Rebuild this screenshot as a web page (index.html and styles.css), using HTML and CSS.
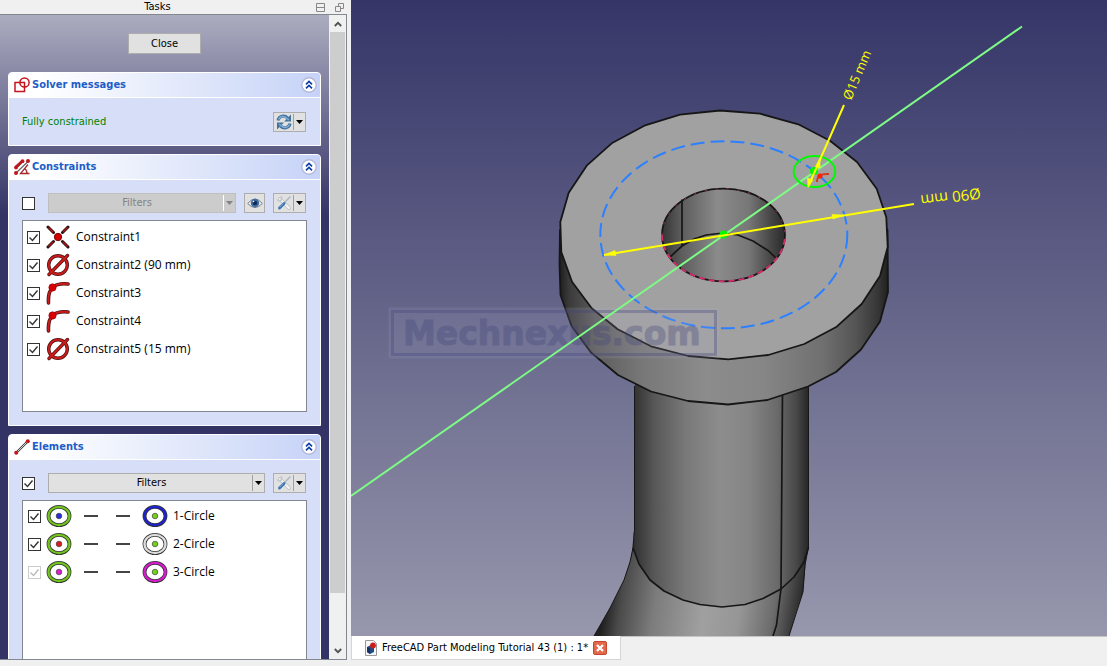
FILE: index.html
```html
<!DOCTYPE html>
<html lang="en">
<head>
<meta charset="utf-8">
<title>FreeCAD Part Modeling Tutorial 43</title>
<link rel="stylesheet" href="styles.css">
</head>
<body>
<svg class="defs" aria-hidden="true">
  <defs>
    <symbol id="caret" viewBox="0 0 7 4"><path d="M0 0h7L3.5 4z" fill="currentColor"/></symbol>
    <symbol id="collapse" viewBox="0 0 16 16">
      <circle cx="8" cy="8" r="7.2" fill="#fff" stroke="#b4b9da" stroke-width="1.4"/>
      <path d="M5 7.3l3-2.8 3 2.8M5 11.3l3-2.8 3 2.8" fill="none" stroke="#0c3fa8" stroke-width="1.7"/>
    </symbol>
    <symbol id="tools" viewBox="0 0 16 16">
      <path d="M4 4l9 9" stroke="#b9bdc0" stroke-width="3.6" stroke-linecap="round"/>
      <path d="M4 4l9 9" stroke="#f4f4f4" stroke-width="2.2" stroke-linecap="round"/>
      <path d="M1.500 4.500Q2.500 6.500 5 5.500Q6.500 3.500 4.500 1.500" fill="none" stroke="#c6cacc" stroke-width="1.800"/>
      <path d="M14.500 1.500L8 8" stroke="#a9b6c2" stroke-width="1.400"/>
      <path d="M8 8.500L3.500 13" stroke="#3f74b4" stroke-width="3" stroke-linecap="round"/>
      <path d="M7.500 8.200L3.500 12" stroke="#8cb1dc" stroke-width="1"/>
    </symbol>
    <symbol id="coincident" viewBox="0 0 24 24">
      <path d="M2 2l5.500 5.500M22 2l-5.500 5.500M2 22l5.500-5.500M22 22l-5.500-5.500" stroke="#2b1010" stroke-width="3" stroke-linecap="round"/>
      <path d="M2.500 2.500l4.500 4.500M21.500 2.500l-4.500 4.500M2.500 21.500l4.500-4.500M21.500 21.500l-4.500-4.500" stroke="#b01818" stroke-width="1.400"/>
      <circle cx="12" cy="12" r="3.700" fill="#d40000" stroke="#7a1010"/>
    </symbol>
    <symbol id="diameter" viewBox="0 0 24 24">
      <g fill="none" stroke-linecap="round">
        <circle cx="12" cy="12" r="9.300" stroke="#4a1414" stroke-width="3.400"/>
        <path d="M3 21.500L21.500 2.500" stroke="#4a1414" stroke-width="3.400"/>
        <circle cx="12" cy="12" r="9.300" stroke="#cc1a1a" stroke-width="2"/>
        <path d="M3 21.500L21.500 2.500" stroke="#cc1a1a" stroke-width="2"/>
      </g>
    </symbol>
    <symbol id="point-on" viewBox="0 0 24 24">
      <g fill="none" stroke-linecap="round">
        <path d="M2.500 22C2 14 3.500 9 7 6Q12 2 22 3" stroke="#4a1414" stroke-width="3.600"/>
        <path d="M2.500 22C2 14 3.500 9 7 6Q12 2 22 3" stroke="#cc1a1a" stroke-width="2"/>
      </g>
      <circle cx="6.500" cy="6.500" r="3.700" fill="#d80000" stroke="#8e0a0a" stroke-width=".6"/>
    </symbol>
    <symbol id="ring" viewBox="0 0 26 24">
      <ellipse cx="13" cy="12" rx="10.500" ry="9.200" fill="#fff" stroke="#333" stroke-width="3.800"/>
      <ellipse cx="13" cy="12" rx="10.500" ry="9.200" fill="none" stroke="currentColor" stroke-width="2.300"/>
    </symbol>
    <symbol id="check" viewBox="0 0 13 13"><path d="M2.500 6.500l3 3 5-6" fill="none" stroke="currentColor" stroke-width="1.400"/></symbol>
  </defs>
</svg>

<aside class="tasks">
  <header class="dock-title">
    <span class="dock-name">Tasks</span>
    <button class="dock-btn" aria-label="Shade"><svg viewBox="0 0 9 9"><path d="M.5 .500h8v8h-8zM.5 4.500h8" fill="none" stroke="#888"/></svg></button>
    <button class="dock-btn" aria-label="Float"><svg viewBox="0 0 9 9"><path d="M3.500 3V.5h5v5H6M.5 3.500h5v5h-5z" fill="none" stroke="#888"/></svg></button>
  </header>
  <div class="frame">
    <div class="content">
      <button class="btn close">Close</button>

      <section class="group">
        <h2 class="head">
          <svg class="head-icon" viewBox="0 0 16 16" fill="none" stroke="#c4151c" stroke-width="1.500"><path d="M1 5.500h9.500v9H1z"/><circle cx="10.500" cy="5.500" r="4.600"/></svg>
          <span class="head-text">Solver messages</span>
          <button class="collapse" aria-label="Collapse solver messages"><svg><use href="#collapse"/></svg></button>
        </h2>
        <div class="body">
          <div class="row solver">
            <span class="status">Fully constrained</span>
            <button class="btn split" aria-label="Recompute">
              <svg class="ico" viewBox="0 0 16 16">
                <g fill="none" stroke="#42729e" stroke-width="3.200"><path d="M2 6.500C3 1.500 8.500 1 11.500 4"/><path d="M14 9.500C13 14.500 7.500 15 4.500 12"/></g>
                <path d="M15 .5V7.500H8zM1 15.500V8.500H8z" fill="#42729e"/>
                <g fill="none" stroke="#83aed6" stroke-width="1.400"><path d="M2.500 5.500C4 2 8 1.500 11 4.500L13 6"/><path d="M13.500 10.500C12 14 8 14.500 5 11.500L3 10"/></g>
              </svg>
              <span class="arrow"><svg class="caret"><use href="#caret"/></svg></span>
            </button>
          </div>
        </div>
      </section>

      <section class="group">
        <h2 class="head">
          <svg class="head-icon" viewBox="0 0 16 16">
            <path d="M2 9.500L9 2.500M1.500 14.500L14 2.500" stroke="#666" stroke-width="1.200"/>
            <path d="M2 8L8.500 2" stroke="#b71c22" stroke-width="3"/><circle cx="2" cy="8.500" r="1.900" fill="#c4151c"/><circle cx="8.500" cy="2.200" r="1.900" fill="#c4151c"/><circle cx="14" cy="2" r="2" fill="#c4151c"/><circle cx="2" cy="14" r="2" fill="#c4151c"/>
            <path d="M15.500 14.500H6.500L14 5.500M10.500 9.500q2.500 1.500 2.500 5" fill="none" stroke="#a5282b" stroke-width="1.300"/>
          </svg>
          <span class="head-text">Constraints</span>
          <button class="collapse" aria-label="Collapse constraints"><svg><use href="#collapse"/></svg></button>
        </h2>
        <div class="body">
          <div class="row">
            <span class="tick"><input type="checkbox" aria-label="Enable constraint filter"><svg><use href="#check"/></svg></span>
            <button class="btn split filter" disabled><span class="label">Filters</span><span class="arrow"><svg class="caret"><use href="#caret"/></svg></span></button>
            <button class="btn eye" aria-label="Show or hide listed constraints">
              <svg class="ico" viewBox="0 0 16 16"><path d="M.7 8.500Q8-.5 15.300 8.500Q8 16.500.7 8.500z" fill="#f5f5f5" stroke="#777" stroke-width="1"/><circle cx="8" cy="8" r="4.300" fill="#3c6fae"/><circle cx="8" cy="8" r="2.300" fill="#142b4d"/><circle cx="6.500" cy="6.500" r=".8" fill="#fff"/></svg>
            </button>
            <button class="btn split" aria-label="Constraint settings"><svg class="ico"><use href="#tools"/></svg><span class="arrow"><svg class="caret"><use href="#caret"/></svg></span></button>
          </div>
          <ul class="list constraints">
            <li><label><span class="tick"><input type="checkbox" checked><svg><use href="#check"/></svg></span><svg class="cons"><use href="#coincident"/></svg>Constraint1</label></li>
            <li><label><span class="tick"><input type="checkbox" checked><svg><use href="#check"/></svg></span><svg class="cons"><use href="#diameter"/></svg>Constraint2 (90 mm)</label></li>
            <li><label><span class="tick"><input type="checkbox" checked><svg><use href="#check"/></svg></span><svg class="cons"><use href="#point-on"/></svg>Constraint3</label></li>
            <li><label><span class="tick"><input type="checkbox" checked><svg><use href="#check"/></svg></span><svg class="cons"><use href="#point-on"/></svg>Constraint4</label></li>
            <li><label><span class="tick"><input type="checkbox" checked><svg><use href="#check"/></svg></span><svg class="cons"><use href="#diameter"/></svg>Constraint5 (15 mm)</label></li>
          </ul>
        </div>
      </section>

      <section class="group">
        <h2 class="head">
          <svg class="head-icon" viewBox="0 0 16 16"><path d="M2 14L14 2" stroke="#444" stroke-width="2.400"/><path d="M2 14L14 2" stroke="#ccc" stroke-width="1"/><circle cx="2.200" cy="13.800" r="2" fill="#c4151c"/><circle cx="13.800" cy="2.200" r="2" fill="#c4151c"/></svg>
          <span class="head-text">Elements</span>
          <button class="collapse" aria-label="Collapse elements"><svg><use href="#collapse"/></svg></button>
        </h2>
        <div class="body">
          <div class="row">
            <span class="tick"><input type="checkbox" checked aria-label="Enable element filter"><svg><use href="#check"/></svg></span>
            <button class="btn split filter"><span class="label">Filters</span><span class="arrow"><svg class="caret"><use href="#caret"/></svg></span></button>
            <button class="btn split" aria-label="Element settings"><svg class="ico"><use href="#tools"/></svg><span class="arrow"><svg class="caret"><use href="#caret"/></svg></span></button>
          </div>
          <ul class="list elements">
            <li><label><span class="tick"><input type="checkbox" checked><svg><use href="#check"/></svg></span>
              <svg class="circ green" viewBox="0 0 26 24"><use href="#ring"/><circle cx="13" cy="12" r="2.800" fill="#2a2ae0" stroke="#444" stroke-width=".7"/></svg>
              <i class="dash"></i><i class="dash"></i>
              <svg class="circ blue" viewBox="0 0 26 24"><use href="#ring"/><circle cx="13" cy="12" r="2.800" fill="#73d216" stroke="#444" stroke-width=".7"/></svg>1-Circle</label></li>
            <li><label><span class="tick"><input type="checkbox" checked><svg><use href="#check"/></svg></span>
              <svg class="circ green" viewBox="0 0 26 24"><use href="#ring"/><circle cx="13" cy="12" r="2.800" fill="#e01818" stroke="#444" stroke-width=".7"/></svg>
              <i class="dash"></i><i class="dash"></i>
              <svg class="circ grey" viewBox="0 0 26 24"><use href="#ring"/><circle cx="13" cy="12" r="2.800" fill="#73d216" stroke="#444" stroke-width=".7"/></svg>2-Circle</label></li>
            <li><label><span class="tick"><input type="checkbox" checked disabled><svg><use href="#check"/></svg></span>
              <svg class="circ green" viewBox="0 0 26 24"><use href="#ring"/><circle cx="13" cy="12" r="2.800" fill="#e018d8" stroke="#444" stroke-width=".7"/></svg>
              <i class="dash"></i><i class="dash"></i>
              <svg class="circ magenta" viewBox="0 0 26 24"><use href="#ring"/><circle cx="13" cy="12" r="2.800" fill="#73d216" stroke="#444" stroke-width=".7"/></svg>3-Circle</label></li>
          </ul>
        </div>
      </section>
    </div>
    <div class="scrollbar">
      <button class="scroll-btn" aria-label="Scroll up"><svg viewBox="0 0 8 6"><path d="M.8 5L4 1.800 7.200 5" fill="none" stroke="#505050" stroke-width="1.800"/></svg></button>
      <div class="track"><div class="thumb"></div></div>
      <button class="scroll-btn" aria-label="Scroll down"><svg viewBox="0 0 8 6"><path d="M.8 1L4 4.200 7.200 1" fill="none" stroke="#505050" stroke-width="1.800"/></svg></button>
    </div>
  </div>
</aside>

<main class="workspace">
  <svg class="view" viewBox="351 0 756 636" preserveAspectRatio="xMidYMid slice" role="img" aria-label="3D view of the flange sketch">
    <defs>
      <linearGradient id="sky" x1="0" y1="0" x2="0" y2="1"><stop offset="0" stop-color="#353568"/><stop offset="1" stop-color="#9797ad"/></linearGradient>
      <linearGradient id="rim" gradientUnits="userSpaceOnUse" x1="559" y1="0" x2="888" y2="0">
        <stop offset="0" stop-color="#1c1c1c"/><stop offset=".03" stop-color="#3a3a3a"/><stop offset=".11" stop-color="#5c5c5c"/><stop offset=".25" stop-color="#777"/><stop offset=".45" stop-color="#8c8c8c"/><stop offset=".62" stop-color="#868686"/><stop offset=".8" stop-color="#707070"/><stop offset=".9" stop-color="#555"/><stop offset=".97" stop-color="#363636"/><stop offset="1" stop-color="#202020"/>
      </linearGradient>
      <linearGradient id="pipe" gradientUnits="userSpaceOnUse" x1="633" y1="0" x2="809" y2="0">
        <stop offset="0" stop-color="#303030"/><stop offset=".12" stop-color="#575757"/><stop offset=".3" stop-color="#797979"/><stop offset=".5" stop-color="#8d8d8d"/><stop offset=".66" stop-color="#858585"/><stop offset=".82" stop-color="#6a6a6a"/><stop offset=".93" stop-color="#474747"/><stop offset="1" stop-color="#242424"/>
      </linearGradient>
      <linearGradient id="elbow" gradientUnits="userSpaceOnUse" x1="607" y1="590" x2="802" y2="620">
        <stop offset="0" stop-color="#202020"/><stop offset=".08" stop-color="#4a4a4a"/><stop offset=".25" stop-color="#7c7c7c"/><stop offset=".5" stop-color="#a0a0a0"/><stop offset=".68" stop-color="#969696"/><stop offset=".85" stop-color="#6c6c6c"/><stop offset="1" stop-color="#222"/>
      </linearGradient>
      <linearGradient id="bore" gradientUnits="userSpaceOnUse" x1="662" y1="0" x2="786" y2="0">
        <stop offset="0" stop-color="#353535"/><stop offset=".15" stop-color="#5b5b5b"/><stop offset=".45" stop-color="#8b8b8b"/><stop offset=".7" stop-color="#777"/><stop offset=".9" stop-color="#404040"/><stop offset="1" stop-color="#282828"/>
      </linearGradient>
    </defs>
    <rect x="351" width="756" height="636" fill="url(#sky)"/>

    <path d="M633.500 532L632.500 548L630 562L624 580L610 608L594 636H789L796 613L803 592L806 560L808 532z" fill="url(#elbow)"/>
    <path d="M635 380V532L633 548L639 564L650 580L664 591L683 600L700 604.500L722 607L745 604.500L763 598.500L781 589L794 577L804 562L808.500 545V380z" fill="url(#pipe)"/>
    <g fill="none" stroke="#161616" stroke-width="1.700" stroke-linejoin="round">
      <path d="M633 548L639 564L650 580L664 591L683 600L700 604.500L722 607L745 604.500L763 598.500L781 589L794 577L804 562L808.500 547"/>
      <path d="M782.500 394L781 589L776.500 625L773 636"/>
      <path d="M634.500 386V530L633 548L630 562L624 580L610 608L594 636M808.500 386V547L805 565L803 592L789 636" stroke-width="1"/>
    </g>

    <path d="M560 230L559.500 265L560.500 295L571.500 326L591 352.500L618 375L651 391.500L688 401L728 404.500L767.500 400L808 386.500L836 372L861 349.500L880 321.500L888 292L887.500 230z" fill="url(#rim)" stroke="#161616" stroke-width="1.800" stroke-linejoin="round"/>
    <path d="M720 110.500L680 114.700L644.300 125.700L611.700 143.300L586.700 165.700L568.700 192.700L560.300 222L561.300 252L572 281.700L591.700 308.300L617.700 329.300L651 346.300L688.300 356L728.300 359.300L768.300 355L804.300 344L836.700 326.700L861.700 304L880 276L887.700 247L886.300 217.300L876.700 188.700L857 162L830 140.700L798.300 124.300L760 113.700z" fill="#a1a1a1" stroke="#161616" stroke-width="1.800" stroke-linejoin="round"/>

    <ellipse cx="723.500" cy="235" rx="61.500" ry="46.300" fill="url(#bore)"/>
    <g fill="none" stroke="#161616" stroke-width="1.700">
      <path d="M682 199.500V246M670 257L682 246L694 239L706 235L723 233L738 235L753 241L768 250.500L776 258"/>
      <ellipse cx="723.500" cy="235" rx="61.500" ry="46.300"/>
      <path d="M662 235A61.500 46.300 0 0 0 785 235" stroke="#d02f6c" stroke-width="1.900" stroke-dasharray="6 4"/>
      <path d="M662 235A61.500 46.300 0 0 1 785 235" stroke="#b43463" stroke-width="1" stroke-dasharray="2 9"/>
    </g>
    <ellipse cx="723.800" cy="234.800" rx="123.500" ry="93.500" fill="none" stroke="#2c80ff" stroke-width="2" stroke-dasharray="14 6"/>

    <g>
      <rect x="388.500" y="307.500" width="331" height="51" fill="#a6a6c4" fill-opacity=".16"/>
      <rect x="392.500" y="311.500" width="323" height="43" fill="none" stroke="#45487a" stroke-opacity=".35" stroke-width="3"/>
      <text x="403" y="345" class="mark-text">Mechnexus.com</text>
    </g>

    <path d="M351 496L1022 26.500" stroke="#7dfb85" stroke-width="2"/>
    <ellipse cx="814.500" cy="171.500" rx="20.800" ry="15.600" fill="none" stroke="#00fa00" stroke-width="2"/>
    <circle cx="723.500" cy="234.500" r="4" fill="#00fa00"/><circle cx="814" cy="171" r="4" fill="#00fa00"/>
    <path d="M817 182Q817 173 829 174" fill="none" stroke="#d23a22" stroke-width="2"/><circle cx="820" cy="176" r="2.600" fill="#ff2000"/>
    <g stroke="#ff0" stroke-width="2" fill="#ff0">
      <path d="M604 255L914 204M844 105L808 187"/>
      <path d="M604 255L615 250.500L616 255.500zM844 215L832 214.500L833 219zM820 158L815.500 166.500L820 168zM808 187L807.500 178L813 180z" stroke-width=".6"/>
    </g>
    <text class="dim" transform="translate(851 101) rotate(-67)">Ø15 mm</text>
    <text class="dim wide" transform="translate(980 188) rotate(173)">Ø90 mm</text>
  </svg>
  <nav class="tabs">
    <div class="tab">
      <svg class="doc" viewBox="0 0 12 16"><path d="M.5.500h8l3 3v12H.5z" fill="#f6f6f6" stroke="#999"/><path d="M2 7l4-2 3 2v5l-4 2-3-2z" fill="#214a87"/><path d="M2 7l3 1.500V14l-3-2z" fill="#16325c"/><circle cx="8" cy="5.500" r="2.900" fill="#cc1c1c"/></svg>
      <a class="tab-name" href="#">FreeCAD Part Modeling Tutorial 43 (1) : 1*</a>
      <button class="tab-close" aria-label="Close tab"><svg viewBox="0 0 14 14"><rect x=".5" y=".5" width="13" height="13" rx="1.500" fill="#e2694a" stroke="#c8452d"/><path d="M4 4l6 6M10 4l-6 6" stroke="#fff" stroke-width="2.400"/></svg></button>
    </div>
  </nav>
</main>
</body>
</html>
```

FILE: styles.css
```css
* { box-sizing: border-box; }

body {
  margin: 0;
  height: 100vh;
  display: flex;
  overflow: hidden;
  background: #f0f0f0;
  color: #000;
  font: 11px/16px "DejaVu Sans Condensed", "DejaVu Sans", sans-serif;
}

button { font: inherit; color: inherit; padding: 0; border: 0; background: none; }
svg { display: block; flex: none; }
.defs { position: absolute; width: 0; height: 0; }

.tasks { flex: 0 0 351px; display: flex; flex-direction: column; padding: 0 4px 6px 0; }

.dock-title { display: flex; align-items: center; height: 14px; padding-right: 3px; gap: 10px; }
.dock-name { flex: 1; padding-left: 9px; text-align: center; line-height: 14px; }
.dock-btn, .dock-btn svg { width: 9px; height: 9px; }

.frame {
  flex: 1;
  min-height: 0;
  display: flex;
  border: solid #828790;
  border-width: 1px 1px 1px 0;
}

.content {
  flex: 1;
  min-width: 0;
  overflow: hidden;
  display: flex;
  flex-direction: column;
  gap: 8px;
  padding: 18px 8px 0;
  background: linear-gradient(#acacc0, #333366 200px);
}

.btn { height: 20px; border: 1px solid #adadad; background: #e1e1e1; }
.close { flex: none; align-self: center; width: 73px; height: 21px; margin-bottom: 10px; }

.group { flex: none; border: 1px solid #fff; border-radius: 4px 4px 0 0; background: #d6dff7; overflow: hidden; }

.head {
  display: flex;
  align-items: center;
  height: 25px;
  margin: 0;
  padding: 0 3px 0 5px;
  gap: 2px;
  border-bottom: 1px solid #fff;
  background: linear-gradient(90deg, #fff 10%, #c6d3f7);
  color: #215dc6;
  font-size: 11px;
}
.head-icon { width: 16px; height: 16px; }
.head-text { flex: 1; }
.collapse, .collapse svg { width: 16px; height: 16px; }

.body { padding: 13px; }
.row { display: flex; align-items: center; gap: 8px; height: 20px; margin-right: 1px; }
.row .tick { margin-right: 5px; }
.solver { justify-content: space-between; height: 21px; }
.status { color: #008000; }

.split { display: flex; align-items: center; flex: 0 0 33px; padding-left: 2px; }
.ico { width: 16px; height: 16px; }
.arrow { display: flex; align-items: center; justify-content: center; flex: 0 0 12px; height: 16px; margin-left: auto; border-left: 1px solid #a0a0a0; }
.caret { width: 7px; height: 4px; }
.filter { flex: 1; }
.label { flex: 1; text-align: center; }
.filter:disabled { background: #ccc; border-color: #bfbfbf; color: #838383; }
.filter:disabled .arrow { border-color: #fff; }
.eye { flex: 0 0 21px; display: flex; align-items: center; justify-content: center; }

.tick { display: grid; flex: none; width: 13px; height: 13px; color: #333; }
.tick > * { grid-area: 1 / 1; width: 13px; height: 13px; }
.tick input { appearance: none; margin: 0; border: 1px solid #333; background: #fff; }
.tick svg { visibility: hidden; pointer-events: none; position: relative; }
.tick input:checked + svg { visibility: visible; }
.tick input:disabled { border-color: #ccc; }
.tick input:disabled + svg { color: #bbb; }

.list {
  list-style: none;
  min-height: 192px;
  margin: 7px 0 0;
  border: 1px solid #828790;
  background: #fff;
  font: 12px/16px "Open Sans", sans-serif;
}
.list label { display: flex; align-items: center; height: 28px; }
.constraints { padding: 2px 4px; }
.constraints label { gap: 6px; }
.elements { padding: 1px 5px; }
.cons { width: 24px; height: 24px; }
.circ { width: 26px; height: 24px; margin: 0 5px; }
.dash { width: 14px; height: 2px; margin: 0 11px 0 7px; background: #444; }
.dash + .circ { margin-left: 1px; }
.green { color: #73c41e; }
.blue { color: #1f22d0; }
.grey { color: #ddd; }
.magenta { color: #d81cd0; }

.scrollbar { flex: 0 0 17px; display: flex; flex-direction: column; background: #f0f0f0; }
.scroll-btn { display: flex; align-items: center; justify-content: center; height: 17px; }
.scroll-btn svg { width: 8px; height: 6px; }
.track { flex: 1; }
.thumb { height: 92%; width: 15px; margin: 0 auto; background: #cdcdcd; }

.workspace { flex: 1; min-width: 0; display: flex; flex-direction: column; }
.view { flex: 1; width: 100%; min-height: 0; }
.mark-text { font: bold 33px "DejaVu Sans", sans-serif; fill: #45487a; stroke: #45487a; stroke-width: 1px; opacity: .34; }
.dim { font: 13px "Open Sans", sans-serif; fill: #ff0; }
.wide { font-size: 15px; }

.tabs { display: flex; height: 30px; padding-bottom: 6px; border-top: 1px solid #c4c4c4; }
.tab { display: flex; align-items: center; gap: 5px; margin-top: -1px; padding: 0 13px; background: #fff; border: solid #d4d4d4; border-width: 0 1px 1px; }
.doc { width: 12px; height: 16px; }
.tab-name { color: #000; text-decoration: none; white-space: nowrap; }
.tab-close, .tab-close svg { width: 14px; height: 14px; }
```
